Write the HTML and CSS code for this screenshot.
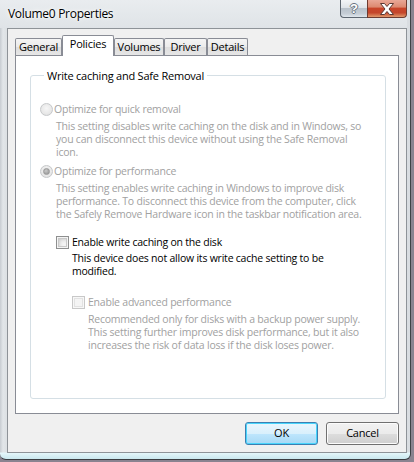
FILE: index.html
```html
<!DOCTYPE html>
<html>
<head>
<meta charset="utf-8">
<link rel="stylesheet" href="styles.css">
</head>
<body>
<div class="window">
  <div class="titlebar">
    <span class="title">Volume0 Properties</span>
    <div class="caption">
      <div class="cap-btn help"><span class="q">?</span></div>
      <div class="cap-btn close">
        <svg width="16" height="12" viewBox="0 0 16 12"><path d="M1.5 0.5h4l2.5 3 2.5-3h4l-4.5 5.5 4.5 5.5h-4l-2.5-3-2.5 3h-4l4.5-5.5z" fill="#fff" stroke="#5a3a34" stroke-width="1"/></svg>
      </div>
    </div>
  </div>
  <div class="client">
    <div class="tabstrip">
      <div class="tab t-general">General</div>
      <div class="tab selected t-policies">Policies</div>
      <div class="tab t-volumes">Volumes</div>
      <div class="tab t-driver">Driver</div>
      <div class="tab t-details">Details</div>
    </div>
    <div class="page">
      <fieldset class="group">
        <legend>Write caching and Safe Removal</legend>
        <div class="opt disabled first">
          <span class="radio"></span>
          <span class="label">Optimize for quick removal</span>
        </div>
        <p class="desc disabled lvl1 gap4">This setting disables write caching on the disk and in Windows, so<br>you can disconnect this device without using the Safe Removal<br>icon.</p>
        <div class="opt disabled gap6">
          <span class="radio checked"></span>
          <span class="label">Optimize for performance</span>
        </div>
        <p class="desc disabled lvl1 gap4">This setting enables write caching in Windows to improve disk<br>performance. To disconnect this device from the computer, click<br>the Safely Remove Hardware icon in the taskbar notification area.</p>
        <div class="opt lvl1 gap15">
          <span class="check"></span>
          <span class="label">Enable write caching on the disk</span>
        </div>
        <p class="desc lvl2 gap3">This device does not allow its write cache setting to be<br>modified.</p>
        <div class="opt disabled lvl2 gap18">
          <span class="check off"></span>
          <span class="label">Enable advanced performance</span>
        </div>
        <p class="desc disabled lvl3 gap4">Recommended only for disks with a backup power supply.<br>This setting further improves disk performance, but it also<br>increases the risk of data loss if the disk loses power.</p>
      </fieldset>
    </div>
    <div class="buttons">
      <div class="btn default">OK</div>
      <div class="btn">Cancel</div>
    </div>
  </div>
</div>
</body>
</html>
```
FILE: styles.css
```css
html, body {
  margin: 0;
  padding: 0;
}
body {
  width: 414px;
  height: 462px;
  overflow: hidden;
  background: #8a8390;
  font-family: "Open Sans", "Liberation Sans", sans-serif;
  font-size: 10.5px;
  letter-spacing: -0.22px;
  color: #000;
}
.window {
  box-sizing: border-box;
  width: 411px;
  height: 460px;
  display: flex;
  flex-direction: column;
  padding: 0 3px 0 7px;
  border-right: 1px solid #3e4246;
  border-bottom: 1px solid #3a3d41;
  border-radius: 0 0 6px 6px;
  background:
    linear-gradient(to bottom, rgba(255,255,255,0) 0, rgba(255,255,255,0) 452px, #e4f6fa 453px, #c9e7ee 459px),
    linear-gradient(to right, #c7ccd1 0, #e2e6e9 3px, #dde1e4 6px, #d9dde1 100%);
}
.titlebar {
  height: 28px;
  flex: none;
  display: flex;
  justify-content: space-between;
  align-items: flex-start;
  margin-left: -7px;
  padding-left: 8px;
  background: linear-gradient(to bottom, #e9ecef 0, #e4e8eb 50%, #dfe3e7 100%);
}
.title {
  margin-top: 6px;
  font-size: 12px;
  line-height: 16px;
  letter-spacing: -0.3px;
  color: #000;
  text-shadow: 0 0 6px #fff, 0 0 3px #fff;
}
.caption {
  display: flex;
  height: 18px;
}
.cap-btn {
  box-sizing: border-box;
  height: 18px;
  display: flex;
  align-items: center;
  justify-content: center;
  border: 1px solid #5d6670;
  border-top: none;
}
.help {
  width: 27px;
  border-radius: 0 0 0 4px;
  border-right: none;
  background: linear-gradient(to bottom, #f3f5f7 0, #dfe4e9 45%, #b9c2cb 50%, #c5cdd5 80%, #dfe6ec 100%);
}
.q {
  font-family: "Liberation Sans", sans-serif;
  font-weight: bold;
  font-size: 13px;
  line-height: 14px;
  letter-spacing: 0;
  color: #fff;
  text-shadow: -1px 0 #6a7480, 1px 0 #6a7480, 0 -1px #6a7480, 0 1px #6a7480;
}
.close {
  width: 40px;
  border-radius: 0 0 4px 0;
  border-color: #6e3b30;
  background: linear-gradient(to bottom, #e9a897 0, #dd8a72 40%, #c8452a 50%, #c4462b 75%, #e19a6c 100%);
}
.client {
  box-sizing: border-box;
  width: 400px;
  height: 425px;
  flex: none;
  display: flex;
  flex-direction: column;
  border: 1px solid #8e9398;
  background: #f0f0f0;
  padding-top: 6px;
}
.tabstrip {
  display: flex;
  align-items: flex-end;
  height: 20px;
  padding-left: 7px;
  position: relative;
  z-index: 1;
}
.tab {
  box-sizing: border-box;
  height: 17px;
  border: 1px solid #898c95;
  border-bottom: none;
  border-radius: 2px 2px 0 0;
  background: linear-gradient(to bottom, #f4f4f4 0, #ebebeb 50%, #dedede 51%, #e6e6e6 100%);
  text-align: center;
  line-height: 15px;
  font-size: 11px;
}
.tab.selected {
  height: 21px;
  margin-bottom: -1px;
  background: #fff;
  line-height: 16px;
}
.t-general { width: 47px; }
.t-policies { width: 52px; }
.t-volumes { width: 50px; }
.t-driver { width: 43px; }
.t-details { width: 41px; }
.page {
  box-sizing: border-box;
  height: 359px;
  margin: 0 7px;
  border: 1px solid #898c95;
  background: #fff;
  display: flex;
  flex-direction: column;
  padding: 12px 12px 14px 14px;
}
.group {
  flex: 1;
  margin: 0;
  padding: 0 0 0 9px;
  border: 1px solid #d5dfe5;
  border-radius: 3px;
  min-width: 0;
}
.group legend {
  margin-left: 4px;
  padding: 0 3px;
  line-height: 15px;
  font-size: 11px;
  color: #000;
}
.opt {
  display: flex;
  align-items: center;
  height: 13px;
  line-height: 13px;
}
.first { margin-top: 20px; }
.gap3 { margin-top: 3px; }
.gap4 { margin-top: 4px; }
.gap6 { margin-top: 6px; }
.gap15 { margin-top: 15px; }
.gap18 { margin-top: 18px; }
.lvl1 { margin-left: 16px; }
.lvl2 { margin-left: 32px; }
.lvl3 { margin-left: 48px; }
.desc {
  margin-bottom: 0;
  line-height: 13px;
  white-space: nowrap;
}
.disabled { color: #a1a1a1; }
.radio {
  box-sizing: border-box;
  width: 13px;
  height: 13px;
  flex: none;
  margin-right: 1px;
  border-radius: 50%;
  border: 1px solid #c6c8ca;
  background: radial-gradient(circle at 50% 40%, #f6f6f6 0, #e8e8e8 60%, #dcdcdc 100%);
  display: flex;
  align-items: center;
  justify-content: center;
}
.radio.checked::after {
  content: "";
  width: 5px;
  height: 5px;
  border-radius: 50%;
  background: radial-gradient(circle at 40% 35%, #c9c9c9 0, #8f8f8f 100%);
  border: 1px solid #9a9a9a;
}
.check {
  box-sizing: border-box;
  width: 13px;
  height: 13px;
  flex: none;
  margin-right: 3px;
  border: 1px solid #8e8f8f;
  background: #f4f4f4;
  box-shadow: inset 0 0 0 1px #f4f4f4, inset 0 0 0 2px #c9c9c9, inset 2px 2px 4px #bdbdbd;
}
.check.off {
  border-color: #c8c8c8;
  box-shadow: inset 0 0 0 1px #f7f7f7, inset 0 0 0 2px #e2e2e2;
}
.buttons {
  display: flex;
  justify-content: flex-end;
  gap: 8px;
  margin-top: 8px;
  padding-right: 7px;
}
.btn {
  box-sizing: border-box;
  width: 73px;
  height: 23px;
  border: 1px solid #707070;
  border-radius: 3px;
  background: linear-gradient(to bottom, #f2f2f2 0, #ebebeb 50%, #dddddd 51%, #cfcfcf 100%);
  box-shadow: inset 0 0 0 1px #fcfcfc;
  text-align: center;
  line-height: 20px;
  font-size: 11px;
}
.btn.default {
  border-color: #3c7fb1;
  background: linear-gradient(to bottom, #eaf6fd 0, #d9f0fc 50%, #bee6fd 51%, #a7d9f5 100%);
  box-shadow: inset 0 0 0 1px #48d5fc;
}
```
